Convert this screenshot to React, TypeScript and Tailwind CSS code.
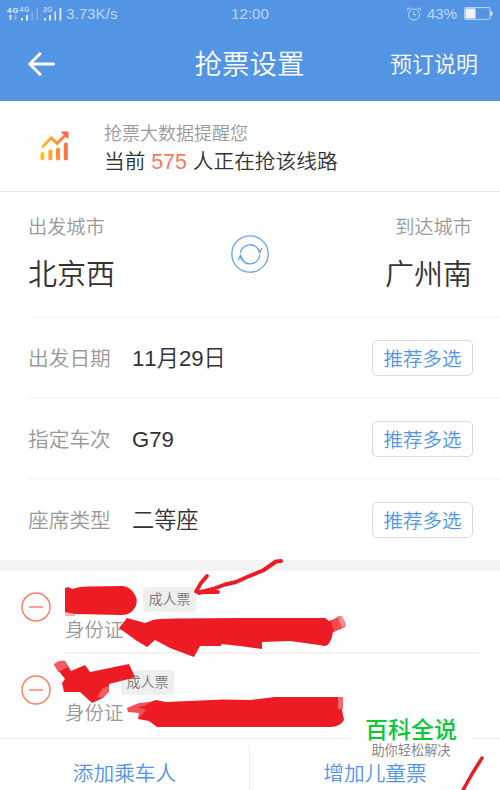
import React from "react";

const tripOptions = [
  { label: "出发日期", value: ["11", "月", "29", "日"] },
  { label: "指定车次", value: ["G79"] },
  { label: "座席类型", value: ["二等座"] },
];

// Digits and latin letters use their own face inside the Chinese text
function Latin({ children }: { children: React.ReactNode }) {
  return (
    <span className="font-['Liberation_Sans',sans-serif] leading-none [font-kerning:none]">
      {children}
    </span>
  );
}

function StatusBar() {
  return (
    <div className="relative flex h-[27px] items-center justify-between pl-[7px] pr-[7px] font-['Liberation_Sans',sans-serif] text-[#bfd8f6]">
      <div className="flex items-center">
        <svg width="56" height="16" viewBox="0 0 56 16" fill="currentColor">
          <g fontWeight="700" fontSize="8">
            <text x="0" y="7" fill="#e6f0fc" textLength="11.5">4G</text>
            <text x="12.5" y="6" fontSize="7" textLength="10">4G</text>
            <text x="36" y="6" fontSize="7" textLength="9.5">2G</text>
          </g>
          <path d="M3.5 8.500L5.500 10.500H4.200V14H2.800V10.500H1.500Z" fill="#e6f0fc" />
          <path d="M8.500 14L6.300 11.500H7.800V8.500H9.200V11.500H10.700Z" opacity=".5" />
          <path d="M14 12h2v2.500h-2zM19 9h2v5.500h-2z" fill="#e6f0fc" />
          <path d="M24.500 5.500h1.500v9h-1.500zM29.500 2h1.500v12.500h-1.500z" opacity=".45" />
          <path d="M37 12h2v2.500h-2zM42 9h2v5.500h-2zM47.500 5.500h1.500v9h-1.500zM52.500 2h1.800v12.500h-1.800z" fill="#e0ecfb" />
        </svg>
        <span className="ml-[3px] text-[15.200px] leading-[27px]">3.73K/s</span>
      </div>
      <span className="absolute left-[231px] text-[15.200px] leading-[27px]">
        12:00
      </span>
      <div className="flex items-center">
        <svg width="14" height="14" viewBox="0 0 14 14" fill="none" stroke="currentColor">
          <circle cx="7" cy="7.500" r="5.500" />
          <path d="M6.800 4.500V7.800H9.300M.8 3.600V1.200H3.500M13.200 3.600V1.200H10.500" />
        </svg>
        <span className="ml-[6px] w-[31px] text-[15px] leading-[27px]">
          43%
        </span>
        <svg className="ml-[6px]" width="29" height="13" viewBox="0 0 29 13">
          <rect x=".6" y=".6" width="25.500" height="11.800" rx="1" fill="none" stroke="currentColor" />
          <rect x="1.500" y="1.500" width="10" height="10" fill="#eff5fd" />
          <rect x="26.500" y="4.500" width="1.800" height="4" fill="#eff5fd" />
        </svg>
      </div>
    </div>
  );
}

function TrendIcon() {
  return (
    <svg width="30" height="30" viewBox="0 0 30 30" fill="none">
      <defs>
        <linearGradient id="trend" gradientUnits="userSpaceOnUse" x1="1" y1="0" x2="29" y2="0">
          <stop offset="0" stopColor="#fbc524" />
          <stop offset="1" stopColor="#fb694c" />
        </linearGradient>
      </defs>
      <g stroke="url(#trend)" strokeLinecap="round">
        <path d="M3 15.500L11.300 6.800L17 12.500L25.500 4" strokeWidth="3" strokeLinejoin="round" />
        <path d="M2.400 23V27.500M10.300 20.500V27.500M18 18.500V27.500M25.800 13.500V27.500" strokeWidth="4" />
      </g>
      <path d="M21.500 1H28V7.500Z" fill="#fb694c" stroke="#fb694c" strokeLinejoin="round" />
    </svg>
  );
}

function Passenger({ spacer, last }: { spacer: string; last?: boolean }) {
  return (
    <div className="flex h-[83px] pl-[21px] pr-[21px] last:h-[84px]">
      <svg className="mt-[21px] shrink-0" width="30" height="30" viewBox="0 0 30 30" fill="none" stroke="#fb8268" strokeWidth="1.500">
        <circle cx="15" cy="15" r="14" />
        <path d="M8 15H22" />
      </svg>
      <div className={`ml-[14px] flex-1 ${last ? "" : "border-b-2 border-[#f3f3f3]"}`}>
        <div className="flex pt-[16px]">
          <span className={spacer} />
          <span className="h-[25px] w-[53px] rounded-[3px] bg-[#efefef] text-center text-[14px] leading-[23px] text-[#777]">
            成人票
          </span>
        </div>
        <p className="mt-[3px] text-[19.500px] leading-[27px] text-[#999]">身份证</p>
      </div>
    </div>
  );
}

// Hand drawn strokes that hide the personal data
function Scribbles() {
  return (
    <svg className="pointer-events-none absolute left-0 top-0" width="500" height="790" viewBox="0 0 500 790" fill="#ed1c24">
      <path d="M65 588L68 587L72 589Q80 586 90 586.500L123 586Q131 587 135 595Q139 602 134 609Q130 615 121 615L76 614L65 612Z" />
      <path d="M65 610H75V616L65 616Z" opacity=".35" />
      <path d="M119 628L127 618L145 623L153 620Q160 618.500 175 618.500L240 618L325 618L329 621L335 619L341 616L345 627L333 632Q331 645 325 646L312 644L290 641L262 642V649L240 646L221 644V646L200 646L194 657L170 648L155 640L147 647L137 641Z" />
      <path d="M331 621L339 616Q343 616 346 625L334 632Z" fill="#f04b51" />
      <path d="M338 617L343 616L346 625L342 628Z" fill="#f9a5a8" opacity=".7" />
      <g fill="none" stroke="#ed1c24" strokeLinecap="round" strokeLinejoin="round">
        <path d="M281 561L276 561.500L263 570.500L247 577L236 582L225 584.500L213 589L199 593" strokeWidth="4" />
        <path d="M207 576L201 583L196 591.500L201 592L218 592M199 592L212 589.500" strokeWidth="3.800" />
        <path d="M482 758L472 774L463 790" strokeWidth="3.500" />
      </g>
      <path d="M54 665Q59 660 65 661L71 671L85 665L90 672L129 664L135 677L125 680L109 684L109 691L103 698L92 703L80 692L64 692L62 683L65 679Z" />
      <path d="M54 664Q59 660 65 661L68 667L58 672Z" fill="#f25d62" />
      <path d="M103 688L109 686L109 692L102 698L97 697Z" fill="#f25d62" />
      <path d="M127 709L135 705L150 702L156 700L166 702L223 699.500L250 700L275 697L342 697V710L344 720Q341 726 331 727L290 727H157L149 721L138 719L139 713Z" />
      <path d="M127 708L139 703L151 702L145 706L138 707L146 710L139 718V713L128 712Z" fill="#f15158" />
      <path d="M338 697H343V709H338Z" fill="#f46a70" />
    </svg>
  );
}

export default function App() {
  return (
    <div className="relative h-[790px] w-[500px] overflow-hidden bg-white font-['Noto_Sans_CJK_SC',sans-serif] font-[350] text-[#333]">
      <header className="h-[101px] bg-[#5394e4]">
        <StatusBar />
        <div className="grid h-[70px] grid-cols-[1fr_auto_1fr] items-center pl-[28px] pr-[22px] text-white">
          <svg className="mt-[4px]" width="27" height="24" viewBox="0 0 27 24" fill="none" stroke="white" strokeWidth="3" strokeLinecap="round" strokeLinejoin="round">
            <path d="M25.500 12H2M12 1.800L1.800 12L12 22.200" />
          </svg>
          <h1 className="-ml-[7px] text-[27.500px] leading-[40px]">抢票设置</h1>
          <span className="text-right text-[22px] leading-[32px]">预订说明</span>
        </div>
      </header>

      <section className="flex h-[91px] items-center border-b border-[#e8e8e8] pl-[40px]">
        <TrendIcon />
        <div className="ml-[34px]">
          <p className="text-[18px] leading-[27px] text-[#999]">抢票大数据提醒您</p>
          <p className="text-[20.700px] leading-[28px]">
            当前<Latin> <span className="text-[21.500px] text-[#fb7661]">575</span> </Latin>人正在抢该线路
          </p>
        </div>
      </section>

      <section className="ml-[28px] flex h-[126px] justify-between border-b-2 border-[#f7f7f7] pr-[28px] pt-[19px]">
        <div className="w-[120px]">
          <p className="text-[19.200px] leading-[30px] text-[#999]">出发城市</p>
          <p className="mt-[10px] text-[29px] leading-[42px]">北京西</p>
        </div>
        <svg className="mt-[24px]" width="38" height="38" viewBox="0 0 38 38" fill="none" stroke="#65a1ec" strokeWidth="1.300">
          <circle cx="19" cy="19" r="18.200" />
          <path d="M9.300 18.500A9.800 9.800 0 0 1 28.500 17M28.800 19.500A9.800 9.800 0 0 1 9.500 21.500M26.500 13.500L28.800 17.500L31 13M7.200 25L9.500 20.500L11.700 24.500" />
        </svg>
        <div className="w-[120px] text-right">
          <p className="text-[19.200px] leading-[30px] text-[#999]">到达城市</p>
          <p className="mt-[10px] text-[29px] leading-[42px]">广州南</p>
        </div>
      </section>

      <section>
        {tripOptions.map((option, index) => (
          <div
            key={index}
            className="ml-[28px] flex h-[81px] items-center border-b-2 border-[#f7f7f7] pr-[27px] last:h-[80px] last:border-b last:border-transparent"
          >
            <span className="w-[104px] text-[20.700px] text-[#999]">{option.label}</span>
            <span className="-mt-[2px] flex-1 text-[22.200px]">
              {option.value.map((part) =>
                /\d/.test(part) ? <Latin key={part}>{part}</Latin> : part
              )}
            </span>
            <button className="h-[36px] w-[101px] rounded-[5px] border border-[#d9d9d9] text-[19.500px] leading-[34px] text-[#5394e4]">
              推荐多选
            </button>
          </div>
        ))}
      </section>

      <div className="h-[11px] bg-[#f4f4f4]" />

      <section>
        <Passenger spacer="w-[78px]" />
        <Passenger spacer="w-[56px]" last />
      </section>

      <footer className="grid h-[53px] grid-cols-2 border-t border-[#eee] pt-[7px] text-center text-[20.700px] leading-[53px] text-[#5394e4]">
        <span className="border-r border-[#eee]">添加乘车人</span>
        <span>增加儿童票</span>
      </footer>

      <Scribbles />

      {/* Watermark */}
      <div className="absolute left-[350px] top-[715px] w-[122px] bg-white text-center">
        <p className="text-[23px] font-medium leading-[26px] text-[#08ca37]">百科全说</p>
        <p className="text-[13.200px] leading-[18px] font-normal text-[#888]">助你轻松解决</p>
      </div>
    </div>
  );
}
